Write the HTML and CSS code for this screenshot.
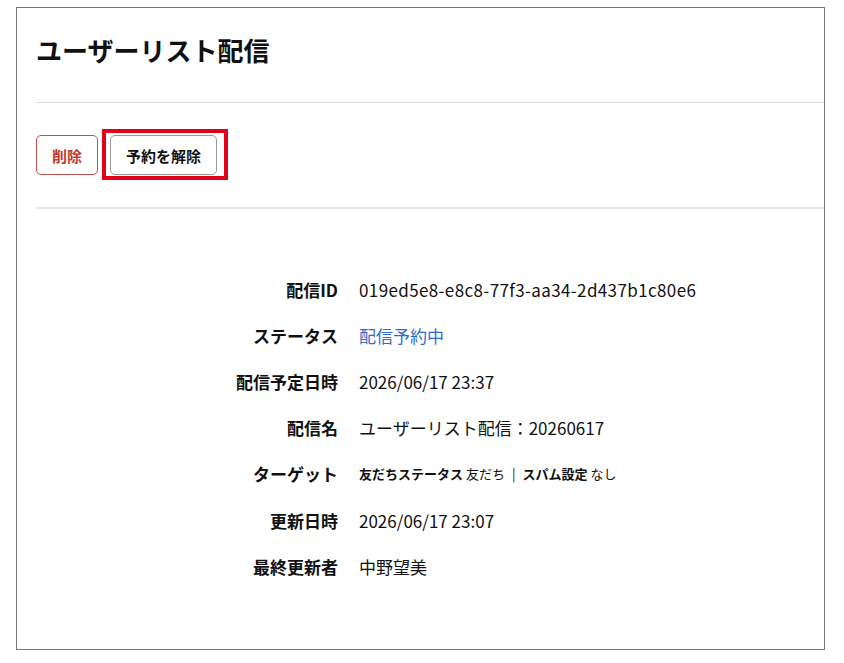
FILE: index.html
```html
<!DOCTYPE html>
<html lang="ja">
<head>
    <meta charset="UTF-8">
    <meta name="viewport" content="width=device-width, initial-scale=1.0">
    <title>ユーザーリスト配信</title>
    <link rel="stylesheet" href="styles.css">
</head>
<body>
    <div class="panel">
        <div class="panel-header">
            <h1>ユーザーリスト配信</h1>
        </div>

        <div class="toolbar">
            <button class="btn btn-danger" type="button">削除</button>
            <button class="btn btn-default marked" type="button">予約を解除</button>
        </div>

        <dl class="details">
            <dt>配信ID</dt>
            <dd class="uuid">019ed5e8-e8c8-77f3-aa34-2d437b1c80e6</dd>
            <dt>ステータス</dt>
            <dd class="status">配信予約中</dd>
            <dt>配信予定日時</dt>
            <dd>2026/06/17 23:37</dd>
            <dt>配信名</dt>
            <dd>ユーザーリスト配信：20260617</dd>
            <dt>ターゲット</dt>
            <dd class="target"><b>友だちステータス</b> 友だち<span class="sep">|</span><b>スパム設定</b> なし</dd>
            <dt>更新日時</dt>
            <dd>2026/06/17 23:07</dd>
            <dt>最終更新者</dt>
            <dd>中野望美</dd>
        </dl>
    </div>
</body>
</html>
```

FILE: styles.css
```css
body {
    margin: 0;
    font-family: "Noto Sans CJK JP", "Noto Sans", sans-serif;
    color: #111;
    background: #fff;
}
.panel {
    margin: 7px 0 0 16px;
    width: 807px;
    height: 641px;
    border: 1px solid #777;
}
.panel-header {
    margin-left: 19px;
    height: 95px;
    padding-top: 24px;
    box-sizing: border-box;
    border-bottom: 1px solid #dcdcdc;
}
h1 {
    margin: 0;
    font-size: 26px;
    line-height: 36px;
    font-weight: 700;
}
.toolbar {
    margin-left: 19px;
    padding: 32px 0;
    display: flex;
    gap: 12px;
    border-bottom: 2px solid #e8e8e8;
}
.btn {
    height: 40px;
    padding: 0 15px;
    font-family: inherit;
    font-size: 15px;
    font-weight: 700;
    background: #fff;
    border-radius: 5px;
    cursor: pointer;
}
.btn-danger {
    color: #c0392f;
    border: 1px solid #c0504a;
}
.btn-default {
    color: #111;
    border: 1px solid #999;
}
.marked {
    position: relative;
}
.marked::after {
    content: "";
    position: absolute;
    top: -7px;
    bottom: -6px;
    left: -9px;
    right: -12px;
    border: 4px solid #e2001a;
}
.details {
    margin: 0;
    padding: 57px 0 0 19px;
    display: grid;
    grid-template-columns: 302px auto;
    grid-auto-rows: 46.2px;
    column-gap: 21px;
    align-items: center;
    font-size: 17px;
}
.details dt {
    font-weight: 700;
    text-align: right;
}
.details dd {
    margin: 0;
}
.uuid {
    letter-spacing: 0.38px;
}
.status {
    color: #2f6bc9;
}
.target {
    font-size: 13px;
}
.sep {
    margin: 0 7px;
}
```
